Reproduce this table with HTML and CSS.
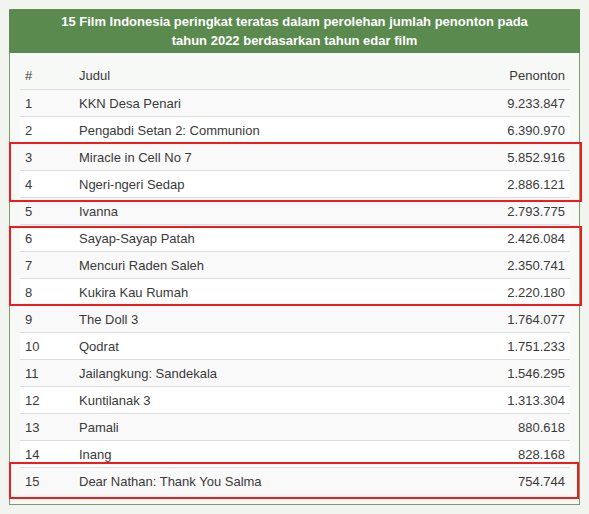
FILE: index.html
```html
<!DOCTYPE html>
<html lang="id">
<head>
<meta charset="utf-8">
<title>15 Film Indonesia 2022</title>
<link rel="stylesheet" href="styles.css">
</head>
<body>
<div class="card">
  <div class="card-title">15 Film Indonesia peringkat teratas dalam perolehan jumlah penonton pada tahun 2022 berdasarkan tahun edar film</div>
  <div class="card-body">
    <table class="films">
      <thead>
        <tr><th class="num">#</th><th>Judul</th><th class="val">Penonton</th></tr>
      </thead>
      <tbody>
        <tr><td class="num">1</td><td>KKN Desa Penari</td><td class="val">9.233.847</td></tr>
        <tr><td class="num">2</td><td>Pengabdi Setan 2: Communion</td><td class="val">6.390.970</td></tr>
        <tr><td class="num">3</td><td>Miracle in Cell No 7</td><td class="val">5.852.916</td></tr>
        <tr><td class="num">4</td><td>Ngeri-ngeri Sedap</td><td class="val">2.886.121</td></tr>
        <tr><td class="num">5</td><td>Ivanna</td><td class="val">2.793.775</td></tr>
        <tr><td class="num">6</td><td>Sayap-Sayap Patah</td><td class="val">2.426.084</td></tr>
        <tr><td class="num">7</td><td>Mencuri Raden Saleh</td><td class="val">2.350.741</td></tr>
        <tr><td class="num">8</td><td>Kukira Kau Rumah</td><td class="val">2.220.180</td></tr>
        <tr><td class="num">9</td><td>The Doll 3</td><td class="val">1.764.077</td></tr>
        <tr><td class="num">10</td><td>Qodrat</td><td class="val">1.751.233</td></tr>
        <tr><td class="num">11</td><td>Jailangkung: Sandekala</td><td class="val">1.546.295</td></tr>
        <tr><td class="num">12</td><td>Kuntilanak 3</td><td class="val">1.313.304</td></tr>
        <tr><td class="num">13</td><td>Pamali</td><td class="val">880.618</td></tr>
        <tr><td class="num">14</td><td>Inang</td><td class="val">828.168</td></tr>
        <tr><td class="num">15</td><td>Dear Nathan: Thank You Salma</td><td class="val">754.744</td></tr>
      </tbody>
    </table>
  </div>
  <div class="mark mark-a"></div>
  <div class="mark mark-b"></div>
  <div class="mark mark-c"></div>
</div>
</body>
</html>
```
FILE: styles.css
```css
html, body {
  margin: 0;
  padding: 0;
  background: #f1f4ef;
}
body {
  padding: 9px;
  font-family: "Liberation Sans", Arial, sans-serif;
  font-size: 13px;
  color: #3a3a3a;
}
.card {
  position: relative;
  width: 569px;
  border: 1px solid #7c9a73;
  border-top: 0;
  background: #f7f9f6;
  box-sizing: content-box;
}
.card-title {
  background: #5b8a4f;
  color: #fff;
  font-weight: bold;
  font-size: 13px;
  line-height: 19px;
  text-align: center;
  padding: 3px 40px 3px 40px;
  height: 38px;
  border-radius: 2px 2px 0 0;
  margin: 0 -1px;
}
.card-body {
  padding: 8px 10px 10px 10px;
}
.films {
  width: 550px;
  border-collapse: collapse;
  table-layout: fixed;
}
.films th {
  font-weight: normal;
  text-align: left;
  height: 28px;
  padding: 0 5px;
  vertical-align: middle;
  border-bottom: 1px solid #ddd;
}
.films td {
  height: 26px;
  padding: 0 5px;
  border-top: 1px solid #ddd;
  vertical-align: middle;
}
.films tbody tr:nth-child(odd) {
  background: #f9f9f9;
}
.films tbody tr:nth-child(even) {
  background: #fff;
}
.films tbody tr:first-child td {
  border-top: 0;
}
.films .num {
  width: 44px;
}
.films .val {
  width: 130px;
  text-align: right;
}
.mark {
  position: absolute;
  border: 2px solid #f21b1b;
  box-sizing: border-box;
}
.mark-a {
  left: -1px;
  top: 133px;
  width: 573px;
  height: 60px;
}
.mark-b {
  left: -1px;
  top: 217px;
  width: 573px;
  height: 80px;
}
.mark-c {
  left: -1px;
  top: 453px;
  width: 570px;
  height: 37px;
}
```
